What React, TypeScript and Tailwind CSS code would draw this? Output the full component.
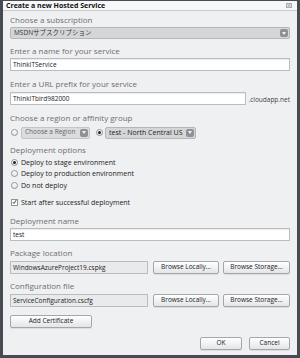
const label = 'h-[10px] text-[8px] leading-[10px] text-[#6e6e6e]';
const input =
  'h-[13px] border border-[#b9bdc2] bg-white px-[2px] text-[6.5px] leading-[11px] text-[#222] shadow-[inset_0_1px_1px_rgba(0,0,0,0.08)]';
const readonly =
  'h-[13px] border border-[#b9bdc2] bg-[#e9eaeb] px-[2px] text-[6.5px] leading-[11px] text-[#222]';
const button =
  'flex h-[13px] items-center justify-center rounded-[2px] border border-[#a3a7ac] bg-gradient-to-b from-white to-[#e3e5e8] text-[6.5px] leading-none text-[#222] shadow-[0_1px_0_rgba(0,0,0,0.08)]';

function Arrow() {
  return (
    <div className="flex h-full w-[8px] items-center justify-center rounded-[2px] bg-[#8e9196]">
      <svg width="4" height="3" viewBox="0 0 4 3">
        <path d="M0 0h4L2 3z" fill="#f2f2f2" />
      </svg>
    </div>
  );
}

function Radio({ checked }: { checked?: boolean }) {
  return (
    <div className="flex h-[7px] w-[7px] shrink-0 items-center justify-center rounded-full border border-[#8f9499] bg-gradient-to-b from-white to-[#e4e6e8]">
      {checked && <div className="h-[3px] w-[3px] rounded-full bg-[#222]" />}
    </div>
  );
}

function Option({ text, checked }: { text: string; checked?: boolean }) {
  return (
    <div className="flex h-[10px] items-center gap-[3px] pl-[1px] text-[7px] leading-none text-[#222]">
      <Radio checked={checked} />
      <span>{text}</span>
    </div>
  );
}

export default function App() {
  return (
    <div
      className="flex h-[358px] w-[300px] flex-col bg-[#474c53] pb-[3px] pl-[3px] pr-[3px] pt-[1px]"
      style={{ fontFamily: '"Open Sans", "Noto Sans CJK JP", sans-serif' }}
    >
      <div className="flex h-[10px] items-center justify-between border-b border-[#c9cdd1] bg-[#f6f7f8] pl-[3px] pr-[5px]">
        <span className="text-[7px] font-bold leading-none text-[#111]">Create a new Hosted Service</span>
        <svg width="6" height="5" viewBox="0 0 6 5">
          <rect x="0.5" y="0.5" width="5" height="4" fill="#e4e5e6" stroke="#a9acb0" />
          <path d="M1.5 1.2l3 2.6M4.5 1.2l-3 2.6" stroke="#9a9da1" strokeWidth="0.8" />
        </svg>
      </div>

      <div className="flex flex-1 flex-col bg-[#eff0f2] px-[7px]">
        <div className={`${label} mt-[4px]`}>Choose a subscription</div>
        <div className="mt-[2px] flex h-[12px] items-center justify-between rounded-[2px] border border-[#b3b6ba] bg-[#d5d6d8] py-[1px] pl-[3px] pr-[1px]">
          <span className="text-[6.5px] leading-none text-[#333]">MSDNサブスクリプション</span>
          <Arrow />
        </div>

        <div className={`${label} mt-[7px]`}>Enter a name for your service</div>
        <div className={`${input} mt-[2px]`}>ThinkITService</div>

        <div className={`${label} mt-[8px]`}>Enter a URL prefix for your service</div>
        <div className="mt-[3px] flex items-end gap-[2px]">
          <div className={`${input} w-[237px]`}>ThinkITbird982000</div>
          <span className="text-[6.5px] leading-[11px] text-[#444]">.cloudapp.net</span>
        </div>

        <div className={`${label} mt-[8px]`}>Choose a region or affinity group</div>
        <div className="mt-[3px] flex h-[13px] items-center">
          <div className="ml-[1px]">
            <Radio />
          </div>
          <div className="ml-[3px] flex h-[12px] w-[69px] items-center justify-between rounded-[2px] border border-[#c3c5c8] bg-[#dcdddf] py-[1px] pl-[3px] pr-[1px]">
            <span className="text-[6.5px] leading-none text-[#666]">Choose a Region</span>
            <Arrow />
          </div>
          <div className="ml-[6px]">
            <Radio checked />
          </div>
          <div className="ml-[2px] flex h-[12px] w-[91px] items-center justify-between rounded-[2px] border border-[#b3b6ba] bg-[#d5d6d8] py-[1px] pl-[3px] pr-[1px]">
            <span className="text-[7px] leading-none text-[#222]">test - North Central US</span>
            <Arrow />
          </div>
        </div>

        <div className={`${label} mt-[6px]`}>Deployment options</div>
        <div className="mt-[2px]">
          <Option text="Deploy to stage environment" checked />
        </div>
        <div className="mt-[1px]">
          <Option text="Deploy to production environment" />
        </div>
        <div className="mt-[2px]">
          <Option text="Do not deploy" />
        </div>
        <div className="mt-[7px] flex h-[10px] items-center gap-[3px] pl-[1px] text-[7px] leading-none text-[#222]">
          <div className="flex h-[7px] w-[7px] items-center justify-center border border-[#8f9499] bg-white">
            <svg width="6" height="6" viewBox="0 0 6 6">
              <path d="M1 3.2l1.4 1.6L5 0.8" fill="none" stroke="#222" strokeWidth="1" />
            </svg>
          </div>
          <span>Start after successful deployment</span>
        </div>

        <div className={`${label} mt-[9px]`}>Deployment name</div>
        <div className={`${input} mt-[2px]`}>test</div>

        <div className={`${label} mt-[7px]`}>Package location</div>
        <div className="mt-[3px] flex items-center">
          <div className={`${readonly} w-[138px]`}>WindowsAzureProject19.cspkg</div>
          <div className={`${button} ml-[5px] w-[66px]`}>Browse Locally...</div>
          <div className={`${button} ml-[4px] w-[67px]`}>Browse Storage...</div>
        </div>

        <div className={`${label} mt-[7px]`}>Configuration file</div>
        <div className="mt-[3px] flex items-center">
          <div className={`${readonly} w-[138px]`}>ServiceConfiguration.cscfg</div>
          <div className={`${button} ml-[5px] w-[66px]`}>Browse Locally...</div>
          <div className={`${button} ml-[4px] w-[67px]`}>Browse Storage...</div>
        </div>

        <div className={`${button} mt-[8px] w-[82px]`}>Add Certificate</div>

        <div className="mt-[9px] flex justify-end gap-[7px]">
          <div className={`${button} w-[42px]`}>OK</div>
          <div className={`${button} w-[41px]`}>Cancel</div>
        </div>
      </div>
    </div>
  );
}
